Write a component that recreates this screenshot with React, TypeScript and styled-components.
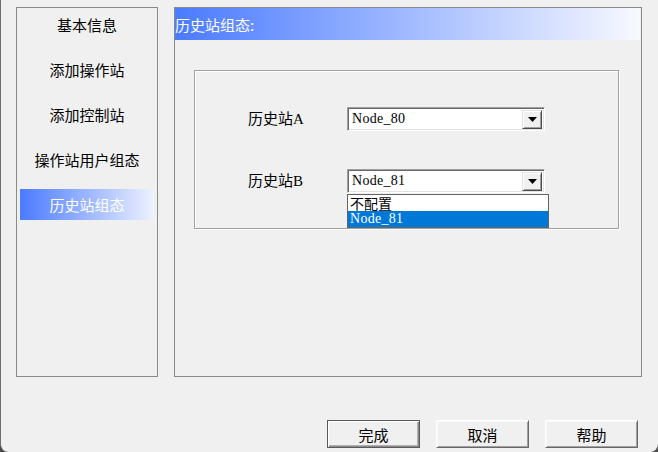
import React from "react";
import styled, { createGlobalStyle } from "styled-components";

const Global = createGlobalStyle`
  html, body { margin: 0; padding: 0; background: #4a4a4a; }
  body { font-family: "Noto Sans CJK SC", "Noto Sans", sans-serif; }
  * { box-sizing: border-box; }
`;

const Window = styled.div`
  width: 658px;
  height: 452px;
  background: #f0f0f0;
  border-left: 1px solid #6e6e6e;
  border-radius: 0 0 8px 8px;
  padding: 7px 16px 0 15px;
  display: flex;
  flex-direction: column;
  overflow: hidden;
`;

const Main = styled.div`
  display: flex;
  gap: 16px;
  height: 370px;
`;

const NavPanel = styled.div`
  width: 142px;
  height: 100%;
  border: 1px solid #8a8a8a;
  padding: 1px 3px 0 3px;
  display: flex;
  flex-direction: column;
  gap: 14px;
`;

const NavItem = styled.div<{ $active?: boolean }>`
  height: 31px;
  display: flex;
  align-items: center;
  justify-content: center;
  font-size: 15px;
  color: ${(p) => (p.$active ? "#ffffff" : "#000000")};
  background: ${(p) =>
    p.$active ? "linear-gradient(to right, #4a7bff, #eef2ff)" : "transparent"};
`;

const ContentPanel = styled.div`
  flex: 1;
  height: 100%;
  border: 1px solid #8a8a8a;
  display: flex;
  flex-direction: column;
`;

const TitleBar = styled.div`
  height: 32px;
  margin-right: 1px;
  background: linear-gradient(to right, #4a7bff, #f8f9ff);
  color: #ffffff;
  font-size: 15px;
  display: flex;
  align-items: center;
`;

const GroupBox = styled.div`
  margin: 30px 22px 0 19px;
  height: 159px;
  border: 1px solid #a0a0a0;
  box-shadow: inset 1px 1px 0 #ffffff, 1px 1px 0 #ffffff;
  padding: 36px 0 0 53px;
  display: grid;
  grid-template-columns: 99px 198px;
  grid-auto-rows: 24px;
  row-gap: 38px;
  align-items: center;
`;

const Label = styled.div`
  font-family: "Liberation Serif", "Noto Sans CJK SC", serif;
  font-size: 15px;
  color: #000;
  margin-top: -4px;
`;

const ComboWrap = styled.div`
  position: relative;
  height: 24px;
`;

const Combo = styled.div`
  height: 24px;
  background: #ffffff;
  border: 1px solid;
  border-color: #a0a0a0 #ffffff #ffffff #a0a0a0;
  box-shadow: inset 1px 1px 0 #696969, inset -1px -1px 0 #e3e3e3;
  display: flex;
  align-items: center;
  padding: 2px 2px 2px 4px;
`;

const ComboText = styled.div`
  flex: 1;
  font-family: "Liberation Serif", serif;
  font-size: 14px;
  letter-spacing: 0.3px;
  color: #000;
`;

const ArrowButton = styled.div`
  width: 20px;
  height: 19px;
  background: #f0f0f0;
  border: 1px solid;
  border-color: #e3e3e3 #4a4a4a #4a4a4a #e3e3e3;
  box-shadow: inset 1px 1px 0 #ffffff, inset -1px -1px 0 #a0a0a0;
  display: flex;
  align-items: center;
  justify-content: center;
`;

const DropList = styled.div`
  position: absolute;
  top: 25px;
  left: 0;
  width: 202px;
  background: #ffffff;
  border: 1px solid #646464;
  display: flex;
  flex-direction: column;
`;

const DropItem = styled.div<{ $selected?: boolean; $mono?: boolean }>`
  height: 16px;
  line-height: 16px;
  padding-left: 2px;
  font-family: ${(p) =>
    p.$mono ? `"Liberation Serif", serif` : `"Noto Sans CJK SC", sans-serif`};
  font-size: 14px;
  letter-spacing: ${(p) => (p.$mono ? "0.3px" : "0")};
  color: ${(p) => (p.$selected ? "#ffffff" : "#000000")};
  background: ${(p) => (p.$selected ? "#0078d7" : "transparent")};
  white-space: nowrap;
`;

const ButtonRow = styled.div`
  margin-top: 43px;
  display: flex;
  justify-content: flex-end;
  gap: 16px;
  padding-right: 4px;
`;

const Button = styled.div<{ $default?: boolean }>`
  width: 93px;
  height: 28px;
  display: flex;
  align-items: center;
  justify-content: center;
  font-size: 15px;
  color: #000;
  background: #f0f0f0;
  border: 1px solid;
  border-color: ${(p) =>
    p.$default ? "#5a5a5a" : "#ffffff #696969 #696969 #ffffff"};
  box-shadow: ${(p) =>
    p.$default
      ? "inset 1px 1px 0 #ffffff, inset -1px -1px 0 #8a8a8a, inset -2px -2px 0 #b0b0b0"
      : "inset 1px 1px 0 #f8f8f8, inset -1px -1px 0 #a0a0a0"};
`;

const Arrow = () => (
  <svg width="9" height="5" viewBox="0 0 9 5">
    <path d="M0 0 H9 L4.5 5 Z" fill="#000" />
  </svg>
);

const navItems = ["基本信息", "添加操作站", "添加控制站", "操作站用户组态", "历史站组态"];

export default function App() {
  return (
    <>
      <Global />
      <Window>
        <Main>
          <NavPanel>
            {navItems.map((t, i) => (
              <NavItem key={t} $active={i === navItems.length - 1}>
                {t}
              </NavItem>
            ))}
          </NavPanel>
          <ContentPanel>
            <TitleBar>历史站组态:</TitleBar>
            <GroupBox>
              <Label>历史站A</Label>
              <ComboWrap>
                <Combo>
                  <ComboText>Node_80</ComboText>
                  <ArrowButton>
                    <Arrow />
                  </ArrowButton>
                </Combo>
              </ComboWrap>
              <Label>历史站B</Label>
              <ComboWrap>
                <Combo>
                  <ComboText>Node_81</ComboText>
                  <ArrowButton>
                    <Arrow />
                  </ArrowButton>
                </Combo>
                <DropList>
                  <DropItem>不配置</DropItem>
                  <DropItem $selected $mono>
                    Node_81
                  </DropItem>
                </DropList>
              </ComboWrap>
            </GroupBox>
          </ContentPanel>
        </Main>
        <ButtonRow>
          <Button $default>完成</Button>
          <Button>取消</Button>
          <Button>帮助</Button>
        </ButtonRow>
      </Window>
    </>
  );
}
